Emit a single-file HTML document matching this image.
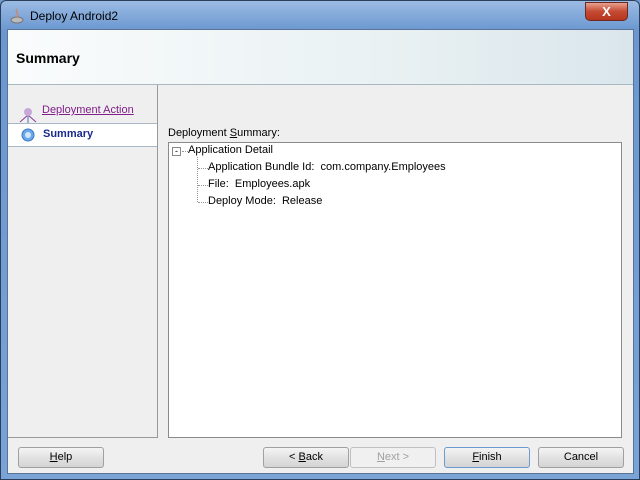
<!DOCTYPE html>
<html><head><style>
*{margin:0;padding:0;box-sizing:border-box}
body{width:640px;height:480px;overflow:hidden;font-family:"Liberation Sans",Tahoma,sans-serif;font-size:11px;background:#6f9bd0}
.frame{position:absolute;left:0;top:0;width:640px;height:480px;background:linear-gradient(180deg,#9bbbe3 0,#6a97d0 30px,#7aa3d6 100%);border:1px solid #2b3f5c;border-radius:6px 6px 0 0}
.title{position:absolute;left:29px;top:8px;font-size:12px;color:#000}
.close{position:absolute;left:584px;top:1px;width:43px;height:19px;background:linear-gradient(#e8a08f,#c44a32 50%,#b73520);border:1px solid #6a2a20;border-radius:0 0 5px 5px;color:#fff;font-weight:bold;text-align:center;font-size:13px;line-height:17px}
.client{position:absolute;left:6px;top:28px;width:627px;height:445px;background:#efefef;border:1px solid #5a7396}
.hdr{position:absolute;left:0;top:0;width:625px;height:55px;background:linear-gradient(90deg,#fafcfc,#e9f1f3 60%,#dae6ec);border-bottom:1px solid #a8b8c0}
.hdr b{position:absolute;left:8px;top:20px;font-size:14px}
.left{position:absolute;left:0;top:55px;width:150px;height:353px;border-right:1px solid #999;border-bottom:1px solid #999;background:#efefef}
.sel{position:absolute;left:0;top:38px;width:149px;height:24px;background:#fff;border-top:1px solid #a8b8c8;border-bottom:1px solid #a8b8c8}
.tree{position:absolute;left:160px;top:112px;width:454px;height:296px;background:#fff;border:1px solid #8a8a8a}
.btn{position:absolute;top:417px;height:21px;border:1px solid #a0a0a0;border-radius:3px;background:linear-gradient(#f4f4f4,#e2e2e2 50%,#d4d4d4);text-align:center;line-height:19px;font-size:11px}
.dots{position:absolute;border-left:1px dotted #999;}
</style></head><body>
<div class="frame">
<svg style="position:absolute;left:8px;top:7px" width="16" height="16"><ellipse cx="8" cy="12" rx="6" ry="3" fill="#bbb" stroke="#777"/><path d="M8 1c-3 3 3 4 0 8" stroke="#c86" fill="none" stroke-width="1.5"/></svg>
<div class="title">Deploy Android2</div>
<div class="close">X</div>
<div class="client">
<div class="hdr"><b>Summary</b></div>
<div class="left">
<svg style="position:absolute;left:10px;top:20px" width="20" height="40"><line x1="10" y1="10" x2="10" y2="30" stroke="#5a6ab8"/><line x1="10" y1="10" x2="2" y2="17" stroke="#8a3a9a"/><line x1="10" y1="10" x2="18" y2="17" stroke="#8a3a9a"/><circle cx="10" cy="7" r="4" fill="#c8a8d8"/><circle cx="10" cy="30" r="6" fill="#6aa8e8" stroke="#3a78c8"/><circle cx="10" cy="30" r="3" fill="#cfe6fb"/></svg>
<div style="position:absolute;left:34px;top:19px;color:#80208a;text-decoration:underline">Deployment Action</div>
<div class="sel"></div>
<svg style="position:absolute;left:10px;top:40px" width="20" height="22"><circle cx="10" cy="10" r="6" fill="#6aa8e8" stroke="#3a78c8"/><circle cx="10" cy="10" r="3" fill="#cfe6fb"/></svg>
<div style="position:absolute;left:35px;top:43px;color:#1a2a8a;font-weight:bold">Summary</div>
</div>
<div style="position:absolute;left:160px;top:97px">Deployment <u>S</u>ummary:</div>
<div class="tree">
<div style="position:absolute;left:3px;top:4px;width:9px;height:9px;border:1px solid #888;font-size:9px;line-height:6px;text-align:center">-</div>
<div style="position:absolute;left:13px;top:8px;width:6px;border-top:1px dotted #999"></div>
<div style="position:absolute;left:19px;top:1px">Application Detail</div>
<div class="dots" style="left:28px;top:14px;height:45px"></div>
<div style="position:absolute;left:29px;top:25px;width:10px;border-top:1px dotted #999"></div>
<div style="position:absolute;left:29px;top:42px;width:10px;border-top:1px dotted #999"></div>
<div style="position:absolute;left:29px;top:59px;width:10px;border-top:1px dotted #999"></div>
<div style="position:absolute;left:39px;top:18px">Application Bundle Id:&nbsp; com.company.Employees</div>
<div style="position:absolute;left:39px;top:35px">File:&nbsp; Employees.apk</div>
<div style="position:absolute;left:39px;top:52px">Deploy Mode:&nbsp; Release</div>
</div>
<div class="btn" style="left:10px;width:86px"><u>H</u>elp</div>
<div class="btn" style="left:255px;width:86px">&lt; <u>B</u>ack</div>
<div class="btn" style="left:342px;width:86px;color:#a0a0a0;background:#f0f0f0;border-color:#c0c0c0"><u>N</u>ext &gt;</div>
<div class="btn" style="left:436px;width:86px;border-color:#6a9ad0"><u>F</u>inish</div>
<div class="btn" style="left:530px;width:86px">Cancel</div>
</div>
</div>
</body></html>
